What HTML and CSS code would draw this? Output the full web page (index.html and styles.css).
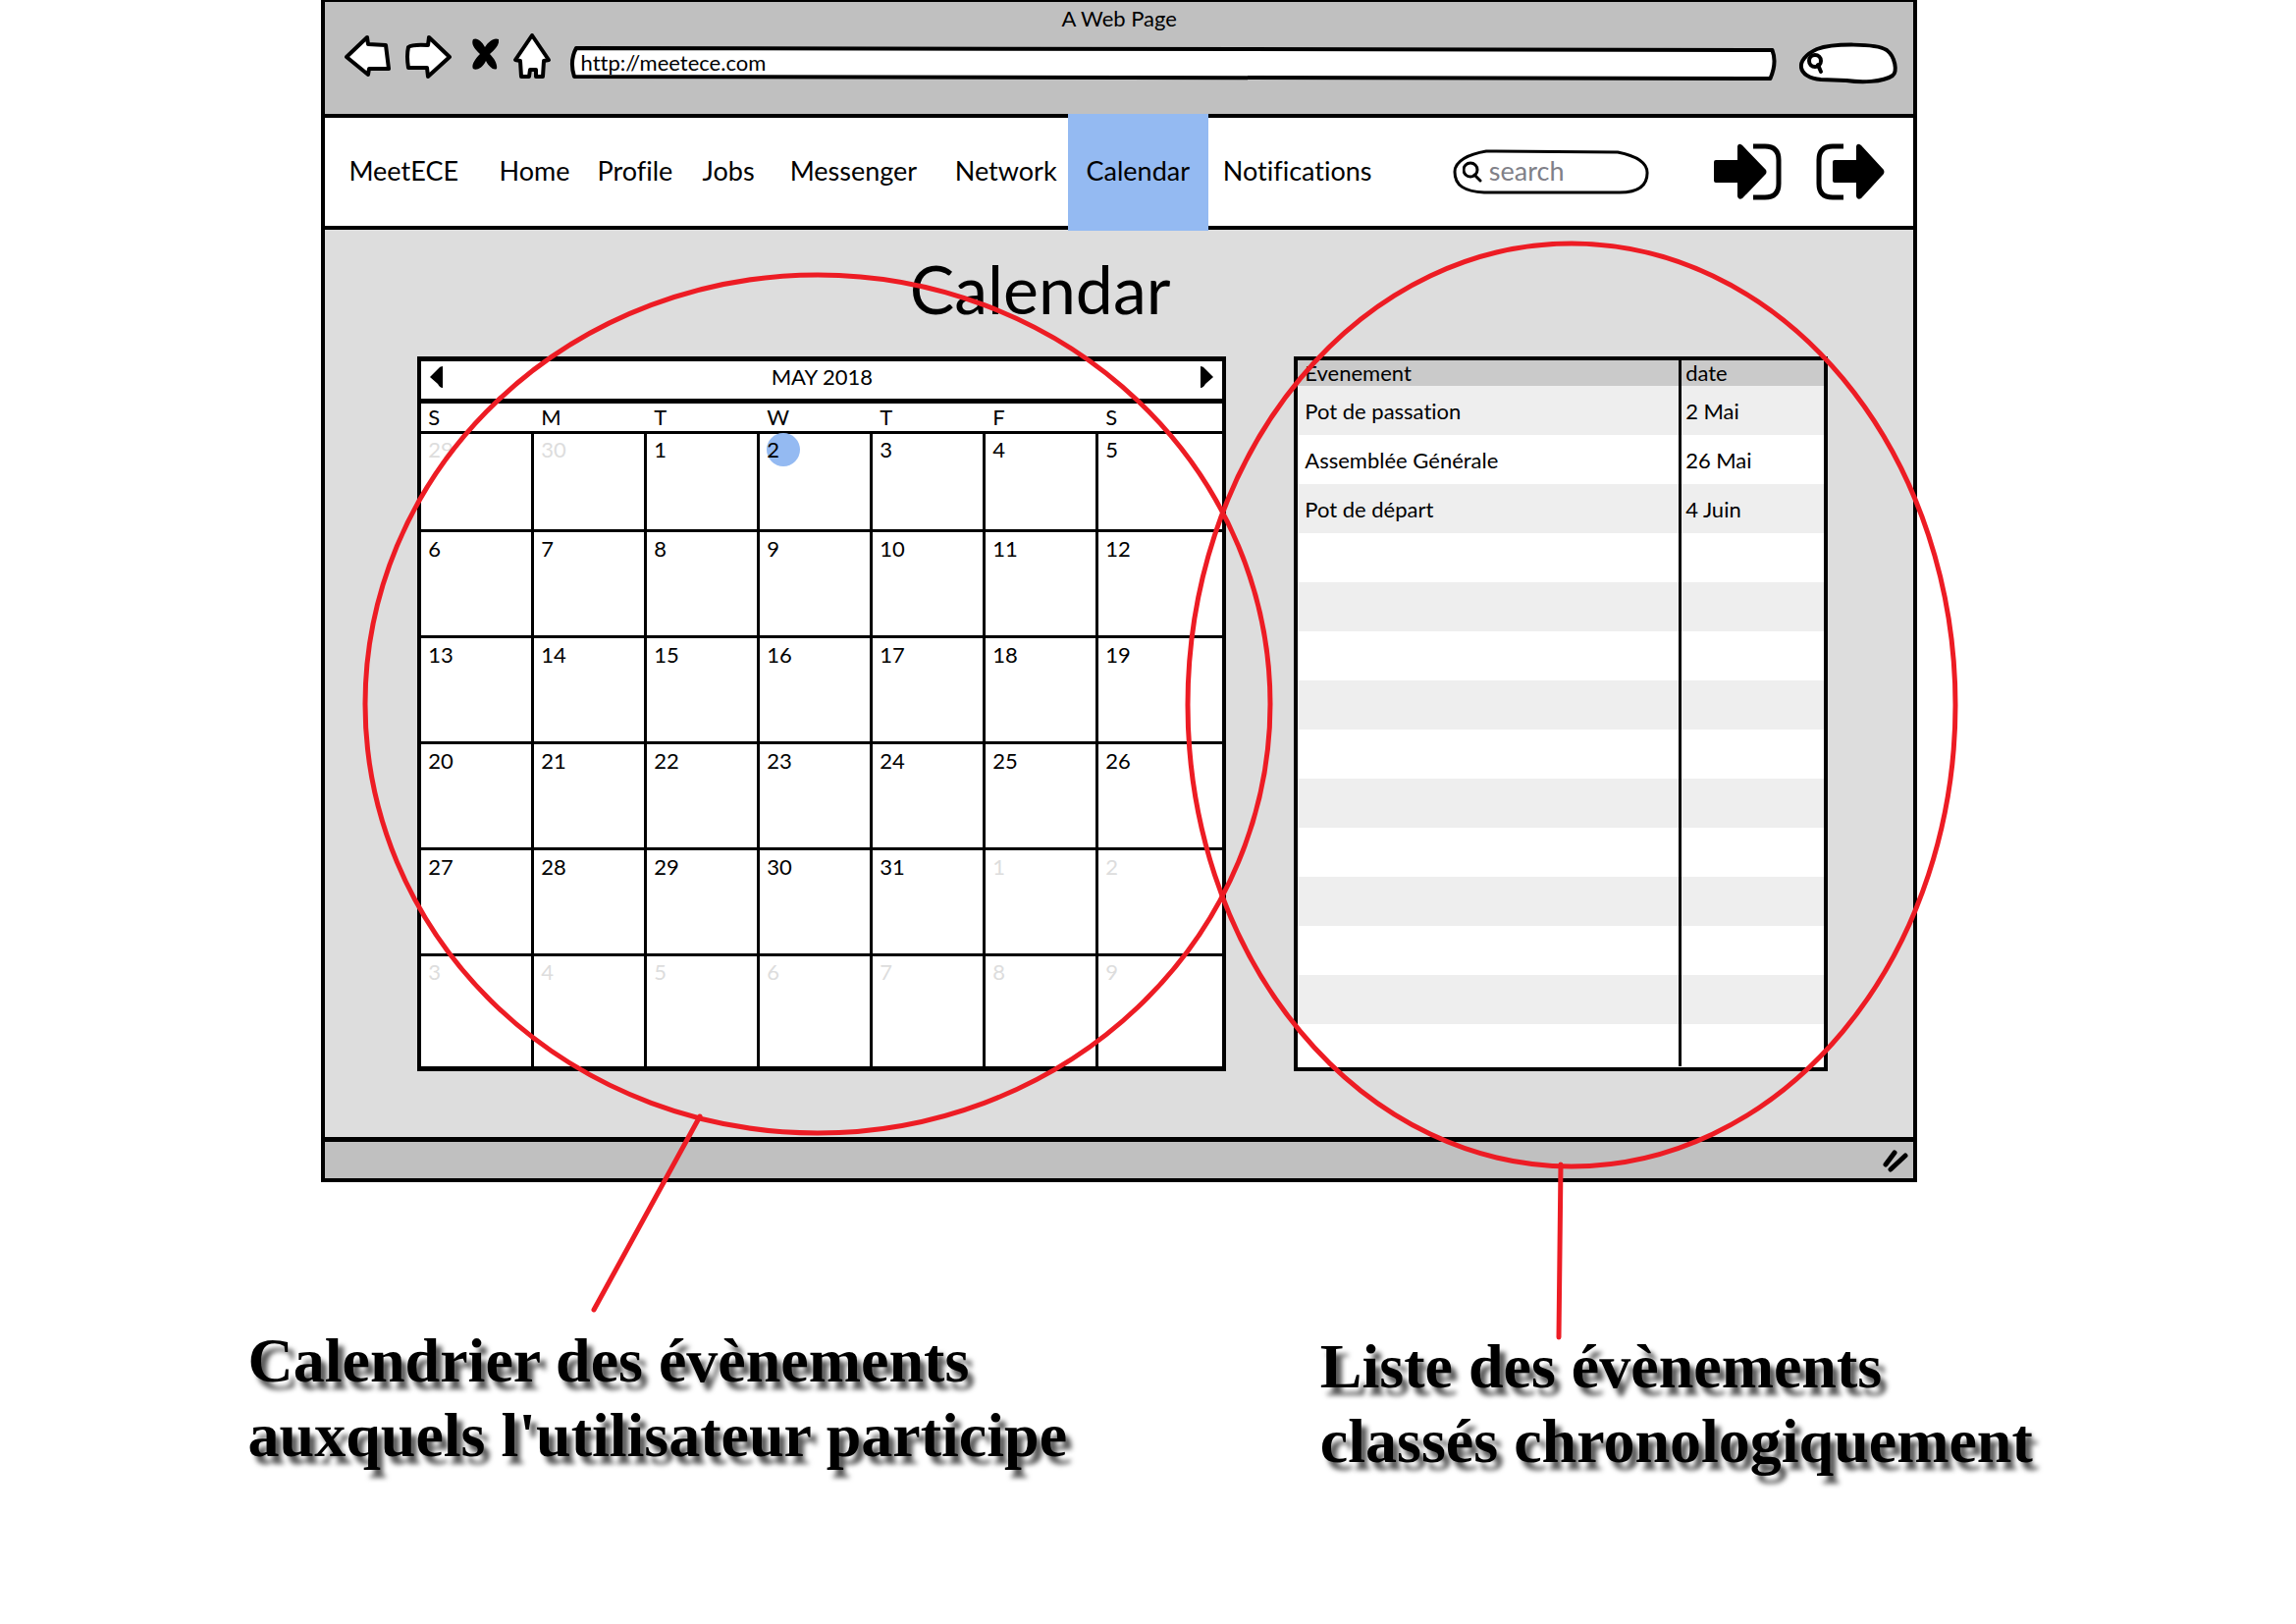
FILE: index.html
```html
<!DOCTYPE html>
<html lang="fr">
<head>
<meta charset="utf-8">
<title>MeetECE - Calendar</title>
<link rel="stylesheet" href="styles.css">
</head>
<body>
<div class="board">
  <div class="window">
    <header class="chrome">
      <div class="chrome-title">A Web Page</div>
      <div class="toolbar">
        <div class="tools">
          <button type="button" class="icon-button" aria-label="Back"><svg width="48" height="50" viewBox="0 0 48 50"><path class="outline" d="M3 26 24 6 25 13 43 14 46 38 26 38 25 44Z"/></svg></button>
          <button type="button" class="icon-button" aria-label="Forward"><svg width="48" height="50" viewBox="0 0 48 50"><path class="outline" d="M46 26 25 6 24 14Q8 13 4 16Q2 25 4 37L23 37 24 46Z"/></svg></button>
          <button type="button" class="icon-button" aria-label="Stop"><svg width="34" height="50" viewBox="0 0 34 50"><path d="M8 8c-2 4 0 9 7 15-6 6-9 12-7 15 3 2 9 0 13-8 3 6 8 10 11 8 1-4-2-10-7-15 7-6 10-11 9-15-5-2-10 2-14 8-3-6-8-10-12-8z"/></svg></button>
          <button type="button" class="icon-button" aria-label="Home page"><svg width="42" height="50" viewBox="0 0 42 50"><path class="outline" d="M20 4 37 29 32 30 31 46 24 46 24 39 18 39 17 46 9 46 8 30 3 29Z"/></svg></button>
        </div>
        <div class="field address">
          <svg class="field-shape" viewBox="0 0 1230 34" preserveAspectRatio="none"><path class="outline" d="M5 2 1223 4Q1228 17 1221 33L3 31Q-2 15 5 2Z"/></svg>
          <input type="text" value="http://meetece.com" aria-label="Address">
        </div>
        <div class="field quick">
          <svg class="field-shape" viewBox="0 0 100 44" preserveAspectRatio="none"><path class="outline" d="M18 7C34 1 78 1 89 8C98 15 100 30 95 34C85 41 62 41 48 39L22 38C-2 36-6 18 18 7Z"/></svg>
          <svg class="quick-glass" width="20" height="22" viewBox="0 0 20 22"><circle cx="10" cy="8" r="6"/><path d="m13 12 3 7"/></svg>
          <input type="search" aria-label="Browser search">
        </div>
      </div>
    </header>

    <nav class="nav">
      <a class="brand" href="#">MeetECE</a>
      <a href="#">Home</a>
      <a href="#">Profile</a>
      <a href="#">Jobs</a>
      <a href="#">Messenger</a>
      <a href="#">Network</a>
      <a class="current" href="#" aria-current="page">Calendar</a>
      <a class="notifications" href="#">Notifications</a>
      <div class="field site-search">
        <svg class="field-shape" viewBox="0 0 200 46" preserveAspectRatio="none"><path class="outline thin" d="M34 2 168 3C188 7 198 14 198 24C198 38 188 44 170 44L32 44C12 43 2 37 2 23C2 12 16 5 34 2Z"/></svg>
        <svg class="glass" width="20" height="22" viewBox="0 0 20 22"><circle cx="8" cy="9" r="7"/><path d="m12 14 6 6"/></svg>
        <input type="search" placeholder="search" aria-label="Search">
      </div>
      <div class="session">
        <button type="button" class="icon-button" aria-label="Log in"><svg width="70" height="60" viewBox="0 0 70 60"><path d="M2 18h22V4q1-4 5-1l24 25q1 2 0 4L29 57q-4 2-5-2V41H2q-2 0-2-2V20q0-2 2-2z"/><path class="bracket" d="M40 4h12q14 0 14 14v24q0 14-14 14H40"/></svg></button>
        <button type="button" class="icon-button" aria-label="Log out"><svg width="70" height="60" viewBox="0 0 70 60"><path d="M19 18h22V4q1-4 5-1l23 25q1 2 0 4L46 57q-4 2-5-2V41H19q-2 0-2-2V20q0-2 2-2z"/><path class="bracket" d="M28 4H17Q3 4 3 18v24q0 14 14 14h11"/></svg></button>
      </div>
    </nav>

    <main class="content">
      <h1>Calendar</h1>
      <div class="panels">
        <section class="calendar">
          <div class="month">
            <button type="button" class="icon-button" aria-label="Previous month"><svg width="14" height="24" viewBox="0 0 14 24"><path d="M13 1v22q-3 0-5-4L0 12l8-8q2-3 5-3z"/></svg></button>
            <span>MAY 2018</span>
            <button type="button" class="icon-button" aria-label="Next month"><svg width="14" height="24" viewBox="0 0 14 24"><path d="M1 1v22q3 0 5-4l8-7-8-8q-2-3-5-3z"/></svg></button>
          </div>
          <table class="days">
            <colgroup><col class="day"><col class="day"><col class="day"><col class="day"><col class="day"><col class="day"><col></colgroup>
            <thead><tr><th>S</th><th>M</th><th>T</th><th>W</th><th>T</th><th>F</th><th>S</th></tr></thead>
            <tbody>
              <tr class="first"><td class="out">29</td><td class="out">30</td><td>1</td><td><span class="today">2</span></td><td>3</td><td>4</td><td>5</td></tr>
              <tr><td>6</td><td>7</td><td>8</td><td>9</td><td>10</td><td>11</td><td>12</td></tr>
              <tr><td>13</td><td>14</td><td>15</td><td>16</td><td>17</td><td>18</td><td>19</td></tr>
              <tr><td>20</td><td>21</td><td>22</td><td>23</td><td>24</td><td>25</td><td>26</td></tr>
              <tr><td>27</td><td>28</td><td>29</td><td>30</td><td>31</td><td class="out">1</td><td class="out">2</td></tr>
              <tr class="last"><td class="out">3</td><td class="out">4</td><td class="out">5</td><td class="out">6</td><td class="out">7</td><td class="out">8</td><td class="out">9</td></tr>
            </tbody>
          </table>
        </section>
        <section class="events">
          <table>
            <colgroup><col class="name"><col></colgroup>
            <thead><tr><th>Évenement</th><th>date</th></tr></thead>
            <tbody>
              <tr><td>Pot de passation</td><td>2 Mai</td></tr>
              <tr><td>Assemblée Générale</td><td>26 Mai</td></tr>
              <tr><td>Pot de départ</td><td>4 Juin</td></tr>
              <tr><td></td><td></td></tr>
              <tr><td></td><td></td></tr>
              <tr><td></td><td></td></tr>
              <tr><td></td><td></td></tr>
              <tr><td></td><td></td></tr>
              <tr><td></td><td></td></tr>
              <tr><td></td><td></td></tr>
              <tr><td></td><td></td></tr>
              <tr><td></td><td></td></tr>
              <tr><td></td><td></td></tr>
              <tr class="last"><td></td><td></td></tr>
            </tbody>
          </table>
        </section>
      </div>
    </main>

    <footer class="status">
      <svg class="grip" width="28" height="24" viewBox="0 0 28 24"><path d="M13 4 4 16"/><path d="M24 7 9 21"/></svg>
    </footer>
  </div>

  <div class="notes">
    <p class="note-calendar">Calendrier des évènements<br>auxquels l'utilisateur participe</p>
    <p class="note-events">Liste des évènements<br>classés chronologiquement</p>
  </div>

  <svg class="marks" viewBox="0 0 2339 1654" preserveAspectRatio="none" aria-hidden="true">
    <ellipse cx="833" cy="717" rx="461" ry="437"/>
    <ellipse cx="1601" cy="718" rx="391" ry="470"/>
    <path d="M713 1137 605 1334M1590 1186 1588 1362"/>
  </svg>
</div>
</body>
</html>
```
FILE: styles.css
```css
* {
  box-sizing: border-box;
}

body {
  margin: 0;
  background: #fff;
  color: #000;
  font: 22px/28px Lato, "Noto Sans", sans-serif;
  font-variant-ligatures: none;
}

.board {
  position: relative;
  min-height: 100vh;
  overflow: hidden;
}

.window {
  width: 69.5%;
  margin-left: 14%;
  border: solid #000;
  border-width: 2px 4px 4px;
  background: #ddd;
}

input {
  width: 100%;
  border: 0;
  padding: 0;
  outline: 0;
  background: transparent;
  color: inherit;
  font: inherit;
  position: relative;
}

.icon-button {
  display: flex;
  border: 0;
  padding: 0;
  background: none;
  color: inherit;
}

.outline {
  fill: #fff;
  stroke: #000;
  stroke-width: 4;
  stroke-linejoin: round;
  vector-effect: non-scaling-stroke;
}

.outline.thin {
  stroke-width: 3;
}

/* Browser chrome */
.chrome {
  height: 114px;
  background: #c0c0c0;
}

.chrome-title {
  padding-top: 4px;
  text-align: center;
  line-height: 26px;
}

.toolbar {
  display: grid;
  grid-template-columns: 250fr 1230fr 21fr 100fr 16fr;
  align-items: start;
}

.tools {
  display: flex;
  gap: 14px;
  padding-left: 19px;
}

.field {
  position: relative;
  display: flex;
  align-items: center;
}

.field-shape {
  position: absolute;
  inset: 0;
  width: 100%;
  height: 100%;
  overflow: visible;
}

.address {
  height: 34px;
  margin-top: 15px;
  padding-left: 10px;
}

.quick {
  grid-column: 4;
  height: 44px;
  margin-top: 11px;
  padding-left: 6px;
}

.glass,
.quick-glass {
  position: relative;
  flex: none;
  fill: none;
  stroke: #000;
  stroke-width: 3;
  stroke-linecap: round;
}

.quick-glass {
  stroke-width: 4;
}

/* Site navigation */
.nav {
  display: grid;
  grid-template-columns: 177fr 100fr 107fr 89fr 168fr 115fr 143fr 249fr 200fr 66fr 203fr;
  align-items: center;
  height: 118px;
  border: solid #000;
  border-width: 4px 0;
  background: #fff;
  font-size: 27px;
  line-height: 32px;
}

.nav a {
  padding-bottom: 4px;
  color: inherit;
  text-decoration: none;
  white-space: nowrap;
}

.nav .brand {
  padding-left: 24px;
}

.nav .current {
  display: flex;
  align-items: center;
  justify-content: center;
  height: 119px;
  margin: -4px 0;
  background: #94baf2;
}

.nav .notifications {
  padding-left: 15px;
}

.site-search,
.session {
  margin-bottom: 2px;
}

.site-search {
  height: 46px;
  gap: 7px;
  padding: 0 12px 0 10px;
}

.site-search input {
  padding-bottom: 2px;
}

.site-search input::placeholder {
  color: #808088;
  opacity: 1;
}

.session {
  grid-column: 11;
  display: flex;
  gap: 34px;
}

.bracket {
  fill: none;
  stroke: #000;
  stroke-width: 5;
}

/* Page content */
.content {
  padding-bottom: 67px;
}

h1 {
  margin: 0;
  padding: 20px 0 29px 36.8%;
  font-weight: 400;
  font-size: 68px;
  line-height: 80px;
}

.panels {
  display: grid;
  grid-template-columns: 825fr 544fr;
  column-gap: 69px;
  margin: 0 5.4% 0 5.8%;
}

table {
  width: 100%;
  border-collapse: separate;
  border-spacing: 0;
  table-layout: fixed;
}

th,
td {
  padding: 0;
  font-weight: 400;
  text-align: left;
  vertical-align: top;
}

.calendar {
  border: solid #000;
  border-width: 5px 4px;
  background: #fff;
}

.month {
  display: flex;
  justify-content: space-between;
  align-items: center;
  height: 43px;
  padding: 0 9px 6px;
  border-bottom: 5px solid #000;
}

.day {
  width: 115px;
}

.days th {
  height: 30px;
  padding-left: 7px;
  border-bottom: 3px solid #000;
  line-height: 28px;
}

.days td {
  height: 108px;
  padding: 3px 0 0 7px;
  border: solid #000;
  border-width: 0 3px 3px 0;
}

.days .first td {
  height: 100px;
  padding-top: 2px;
}

.days .last td {
  height: 112px;
  padding-top: 2px;
  border-bottom: 0;
}

.days td:last-child {
  border-right: 0;
}

.days .out {
  color: #ddd;
}

.today {
  display: block;
  width: 34px;
  height: 34px;
  margin-top: -3px;
  border-radius: 50%;
  background: #94baf2;
  line-height: 34px;
}

.events {
  border: 4px solid #000;
  background: #fff;
}

.name {
  width: 73%;
}

.events th {
  height: 26px;
  padding-left: 7px;
  background: #cacaca;
  line-height: 26px;
}

.events td {
  height: 50px;
  padding: 12px 0 0 7px;
}

.events th:first-child,
.events td:first-child {
  border-right: 3px solid #000;
}

.events th:last-child,
.events td:last-child {
  padding-left: 4px;
}

.events tbody tr:nth-child(odd) {
  background: #eee;
}

.events .last td {
  height: 43px;
}

/* Status bar */
.status {
  display: flex;
  justify-content: flex-end;
  align-items: center;
  height: 42px;
  padding-right: 4px;
  border-top: 5px solid #000;
  background: #c0c0c0;
}

.grip {
  fill: none;
  stroke: #000;
  stroke-width: 5;
  stroke-linecap: round;
}

/* Annotations */
.notes {
  display: grid;
  grid-template-columns: 1092fr 994fr;
  padding: 140px 0 96px 10.8%;
  font: bold 64px/76px "Liberation Serif", serif;
  text-shadow: 6px 8px 5px rgba(0, 0, 0, 0.65);
}

.notes p {
  margin: 0;
}

.notes .note-calendar {
  margin-top: 4px;
}

.notes .note-events {
  margin-top: 10px;
}

.marks {
  position: absolute;
  inset: 0;
  width: 100%;
  height: 100%;
  pointer-events: none;
  fill: none;
  stroke: #ed1c24;
  stroke-width: 5;
  stroke-linecap: round;
}
```
